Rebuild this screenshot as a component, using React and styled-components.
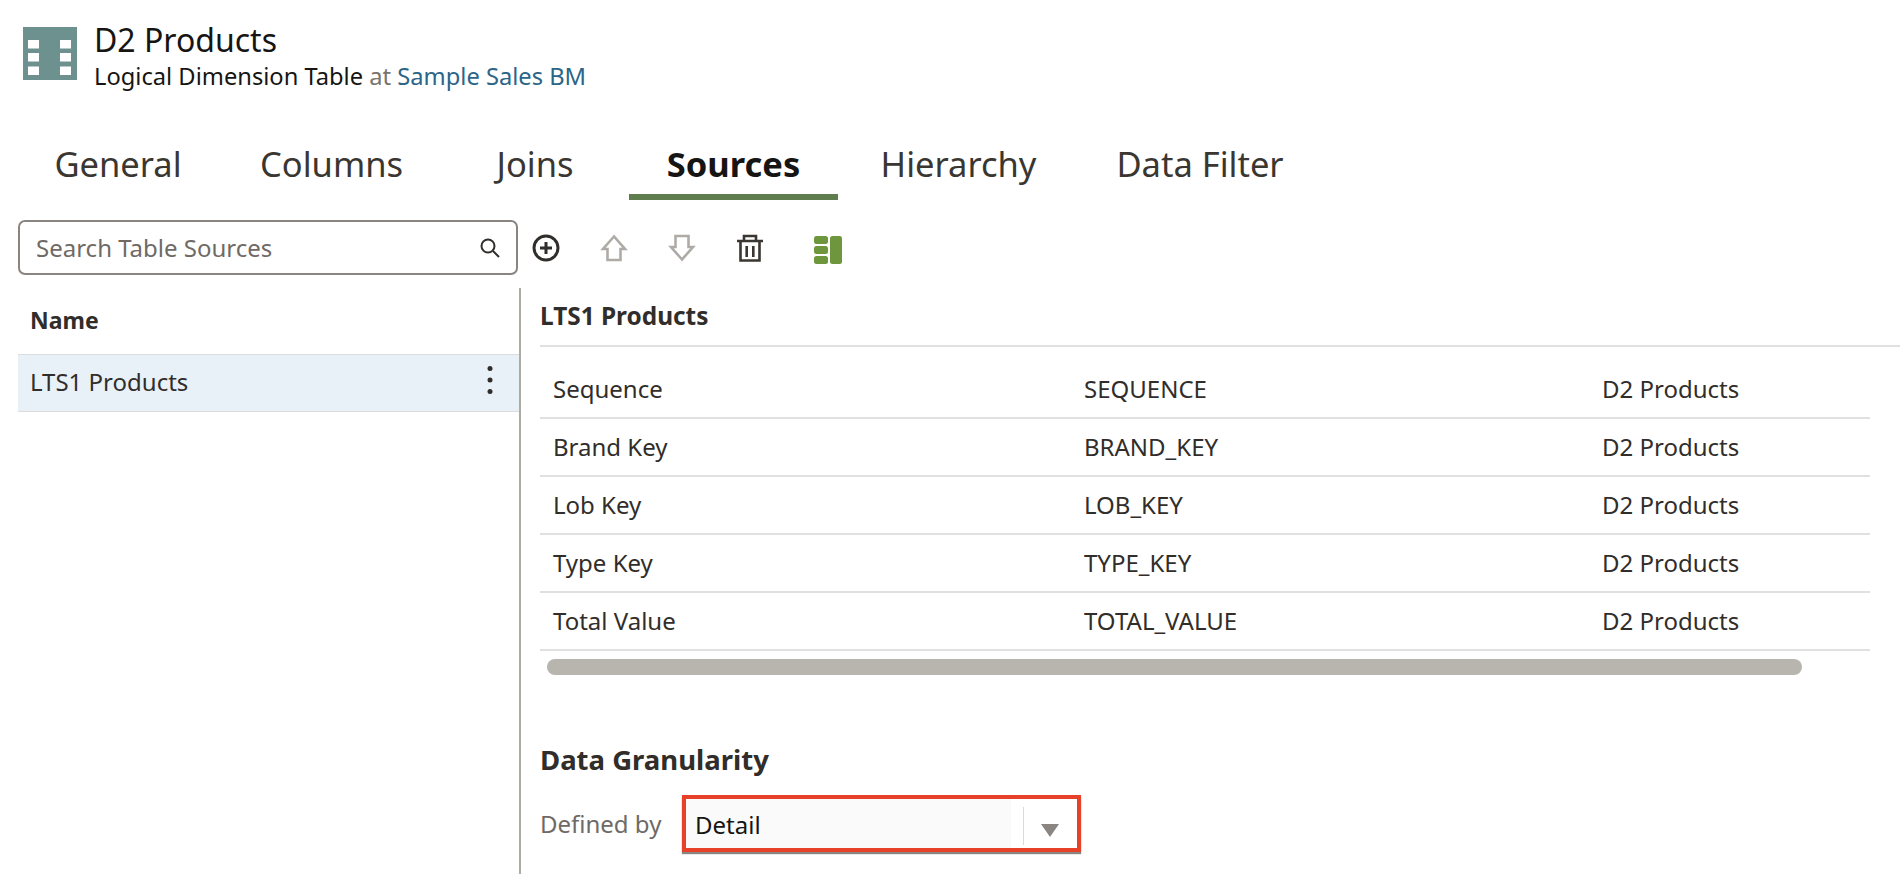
import styled, { createGlobalStyle } from "styled-components";

const GlobalStyle = createGlobalStyle`
  html, body { margin: 0; padding: 0; background: #fff; }
  body { font-family: "Noto Sans", "Open Sans", sans-serif; color: #312d2a; overflow: hidden; }
`;

const Page = styled.div`
  width: 1900px;
  height: 874px;
  overflow: hidden;
`;

const Header = styled.header`
  display: flex;
  gap: 17px;
  padding: 27px 0 0 23px;
  height: 98px;
  box-sizing: border-box;
`;

const TitleIcon = styled.svg`
  width: 54px;
  height: 53px;
  flex: none;
`;

const TitleBlock = styled.div`
  display: flex;
  flex-direction: column;
  margin-top: -5px;
`;

const Title = styled.h1`
  margin: 0;
  font-size: 32px;
  font-weight: 400;
  line-height: 36px;
  color: #161513;
`;

const Subtitle = styled.div`
  font-size: 23.7px;
  line-height: 36px;
  color: #161513;
`;

const Muted = styled.span`
  color: #7a736e;
`;

const LinkText = styled.a`
  color: #2b6587;
`;

const Tabs = styled.nav`
  display: flex;
  padding-left: 14px;
  height: 102px;
  box-sizing: border-box;
`;

const Tab = styled.div`
  width: ${(p) => p.$w}px;
  height: 102px;
  box-sizing: border-box;
  padding-top: 43px;
  text-align: center;
  font-size: 34.5px;
  line-height: 46px;
  font-weight: ${(p) => (p.$active ? 700 : 400)};
  color: ${(p) => (p.$active ? "#161513" : "#3a3631")};
  border-bottom: ${(p) => (p.$active ? "6px solid #5f7d4f" : "0")};
`;

const Toolbar = styled.div`
  display: flex;
  align-items: center;
  height: 55px;
  margin-top: 20px;
  padding-left: 18px;
`;

const SearchBox = styled.div`
  width: 500px;
  height: 55px;
  box-sizing: border-box;
  border: 2px solid #8a8580;
  border-radius: 7px;
  display: flex;
  align-items: center;
  justify-content: space-between;
  padding: 0 15px 0 16px;
  font-size: 24px;
  color: #6f6a65;
`;

const ToolIcons = styled.div`
  display: flex;
  align-items: center;
  margin-left: 9px;
`;

const ToolSlot = styled.div`
  width: ${(p) => p.$w}px;
  display: flex;
  justify-content: center;
`;

const Body = styled.div`
  display: flex;
  margin-top: 13px;
  height: 586px;
`;

const LeftPanel = styled.aside`
  width: 501px;
  margin-left: 18px;
  flex: none;
`;

const ListHeader = styled.div`
  height: 66px;
  padding: 16px 0 0 12px;
  box-sizing: border-box;
  font-size: 23px;
  line-height: 32px;
  font-weight: 700;
  color: #312d2a;
`;

const ListRow = styled.div`
  height: 58px;
  box-sizing: border-box;
  background: #e8f1f8;
  border-top: 1px solid #dcdcdc;
  border-bottom: 1px solid #dcdcdc;
  display: flex;
  align-items: center;
  justify-content: space-between;
  padding: 0 26px 3px 12px;
  font-size: 24px;
`;

const Kebab = styled.svg`
  width: 6px;
  height: 30px;
  margin-bottom: 3px;
`;

const RightPanel = styled.main`
  flex: 1;
  border-left: 2px solid #aeaaa5;
  padding-left: 19px;
  min-width: 0;
`;

const DetailTitle = styled.div`
  height: 59px;
  padding-top: 12px;
  box-sizing: border-box;
  font-size: 24.4px;
  line-height: 32px;
  font-weight: 700;
  border-bottom: 2px solid #e0e0e0;
`;

const Table = styled.div`
  margin-top: 14px;
  width: 1330px;
`;

const Row = styled.div`
  display: grid;
  grid-template-columns: 531px 518px 1fr;
  height: 58px;
  box-sizing: border-box;
  padding: 0 0 2px 13px;
  align-items: center;
  border-bottom: 2px solid #e0e0e0;
  font-size: 24px;
  color: #312d2a;
`;

const Scrollbar = styled.div`
  width: 1255px;
  height: 16px;
  margin: 8px 0 0 7px;
  background: #b8b5af;
  border-radius: 8px;
`;

const SectionTitle = styled.h2`
  margin: 66px 0 0;
  font-size: 27.5px;
  line-height: 38px;
  font-weight: 700;
  color: #312d2a;
`;

const FieldRow = styled.div`
  display: flex;
  align-items: center;
  margin-top: 16px;
`;

const FieldLabel = styled.label`
  width: 142px;
  font-size: 24px;
  color: #6f6a65;
`;

const Select = styled.div`
  width: 399px;
  height: 57px;
  box-sizing: border-box;
  border: 4px solid #e8412a;
  display: flex;
  align-items: center;
  box-shadow: 0 2px 1px #8a8580;
  font-size: 24px;
  color: #161513;
`;

const SelectValue = styled.div`
  width: 325px;
  height: 100%;
  padding: 1px 0 0 9px;
  box-sizing: border-box;
  background: #fafafa;
  display: flex;
  align-items: center;
`;

const SelectDivider = styled.div`
  width: 1px;
  height: 38px;
  margin: 4px 0 0 12px;
  background: #dcdad8;
`;

const Caret = styled.div`
  width: 0;
  height: 0;
  margin: 14px 0 0 17px;
  border-left: 9px solid transparent;
  border-right: 9px solid transparent;
  border-top: 13px solid #8a8580;
`;

const rows = [
  ["Sequence", "SEQUENCE"],
  ["Brand Key", "BRAND_KEY"],
  ["Lob Key", "LOB_KEY"],
  ["Type Key", "TYPE_KEY"],
  ["Total Value", "TOTAL_VALUE"],
];

const tabs = [
  ["General", 208],
  ["Columns", 219],
  ["Joins", 188],
  ["Sources", 209, true],
  ["Hierarchy", 241],
  ["Data Filter", 242],
];

const FilmIcon = () => (
  <TitleIcon viewBox="0 0 54 53">
    <rect width="54" height="53" fill="#6d918e" />
    {[13, 26, 39.5].map((y) => (
      <g key={y} fill="#fff">
        <rect x="5" y={y} width="11" height="8.5" />
        <rect x="37" y={y} width="11" height="8.5" />
      </g>
    ))}
  </TitleIcon>
);

const SearchIcon = () => (
  <svg width="22" height="22" viewBox="0 0 22 22" fill="none" stroke="#312d2a" strokeWidth="2">
    <circle cx="9" cy="9" r="6.5" />
    <path d="M14 14l6 6" />
  </svg>
);

const PlusIcon = () => (
  <svg width="28" height="28" viewBox="0 0 28 28" fill="none" stroke="#312d2a" strokeWidth="3">
    <circle cx="14" cy="14" r="12" />
    <path d="M14 8v12M8 14h12" />
  </svg>
);

const UpIcon = () => (
  <svg width="28" height="28" viewBox="0 0 28 28" fill="none" stroke="#aeaba7" strokeWidth="2.6">
    <path d="M14 2.5L3 15h4.5v11h13V15H25z" />
  </svg>
);

const DownIcon = () => (
  <svg width="28" height="28" viewBox="0 0 28 28" fill="none" stroke="#aeaba7" strokeWidth="2.6">
    <path d="M14 25.5L3 13h4.5V2h13v11H25z" />
  </svg>
);

const TrashIcon = () => (
  <svg width="28" height="28" viewBox="0 0 28 28" fill="none" stroke="#3a3631" strokeWidth="2.6">
    <path d="M1 7h26M8 7V2h12v5M4.5 7v19.5h19V7M10.7 12v11M17.3 12v11" />
  </svg>
);

const LayoutIcon = () => (
  <svg width="28" height="32" viewBox="0 -4 28 32" fill="#6e963c">
    <rect x="0" y="0" width="14" height="8" rx="2.5" />
    <rect x="0" y="10" width="14" height="8" rx="2.5" />
    <rect x="0" y="20" width="14" height="8" rx="2.5" />
    <rect x="16" y="0" width="12" height="28" rx="2.5" />
  </svg>
);

const KebabIcon = () => (
  <Kebab viewBox="0 0 6 30" fill="#312d2a">
    <circle cx="3" cy="3.5" r="2.5" />
    <circle cx="3" cy="15" r="2.5" />
    <circle cx="3" cy="26.5" r="2.5" />
  </Kebab>
);

export default function App() {
  return (
    <Page>
      <GlobalStyle />
      <Header>
        <FilmIcon />
        <TitleBlock>
          <Title>D2 Products</Title>
          <Subtitle>
            Logical Dimension Table <Muted>at</Muted> <LinkText>Sample Sales BM</LinkText>
          </Subtitle>
        </TitleBlock>
      </Header>
      <Tabs>
        {tabs.map(([label, w, active]) => (
          <Tab key={label} $w={w} $active={active}>{label}</Tab>
        ))}
      </Tabs>
      <Toolbar>
        <SearchBox>
          <span>Search Table Sources</span>
          <SearchIcon />
        </SearchBox>
        <ToolIcons>
          <ToolSlot $w={38}><PlusIcon /></ToolSlot>
          <ToolSlot $w={98}><UpIcon /></ToolSlot>
          <ToolSlot $w={38}><DownIcon /></ToolSlot>
          <ToolSlot $w={98}><TrashIcon /></ToolSlot>
          <ToolSlot $w={58}><LayoutIcon /></ToolSlot>
        </ToolIcons>
      </Toolbar>
      <Body>
        <LeftPanel>
          <ListHeader>Name</ListHeader>
          <ListRow>
            <span>LTS1 Products</span>
            <KebabIcon />
          </ListRow>
        </LeftPanel>
        <RightPanel>
          <DetailTitle>LTS1 Products</DetailTitle>
          <Table>
            {rows.map(([name, col]) => (
              <Row key={name}>
                <span>{name}</span>
                <span>{col}</span>
                <span>D2 Products</span>
              </Row>
            ))}
          </Table>
          <Scrollbar />
          <SectionTitle>Data Granularity</SectionTitle>
          <FieldRow>
            <FieldLabel>Defined by</FieldLabel>
            <Select>
              <SelectValue>Detail</SelectValue>
              <SelectDivider />
              <Caret />
            </Select>
          </FieldRow>
        </RightPanel>
      </Body>
    </Page>
  );
}
